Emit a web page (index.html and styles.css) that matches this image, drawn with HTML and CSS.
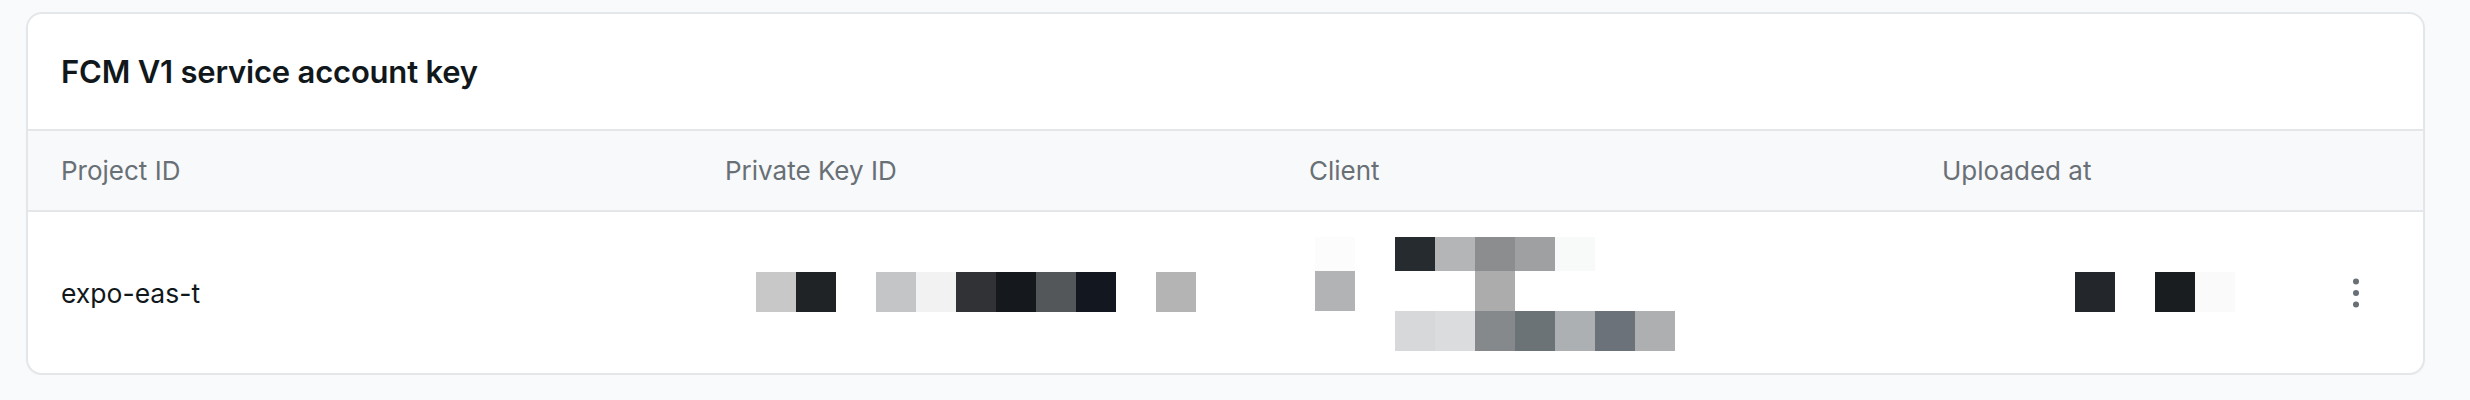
FILE: index.html
```html
<!DOCTYPE html>
<html lang="en">
<head>
<meta charset="utf-8">
<title>FCM V1 service account key</title>
<link rel="stylesheet" href="styles.css">
</head>
<body>
<div class="page">
  <section class="card">
    <header class="card-title">
      <h2>FCM V1 service account key</h2>
    </header>
    <div class="row head">
      <div class="cell">Project ID</div>
      <div class="cell">Private Key ID</div>
      <div class="cell">Client</div>
      <div class="cell">Uploaded at</div>
      <div class="cell"></div>
    </div>
    <div class="row body">
      <div class="cell">expo-eas-t</div>
      <div class="cell">
        <div class="blur key">
          <span class="px g204"></span><span class="px d1"></span><span class="px"></span><span class="px g196"></span><span class="px g242"></span><span class="px d2"></span><span class="px d3"></span><span class="px g85"></span><span class="px d4"></span><span class="px"></span><span class="px g180"></span>
        </div>
      </div>
      <div class="cell">
        <div class="blur client">
          <span class="px g252"></span><span class="px"></span><span class="px d5"></span><span class="px g181"></span><span class="px g140"></span><span class="px g160"></span><span class="px g248"></span><span class="px"></span><span class="px"></span>
          <span class="px g179"></span><span class="px"></span><span class="px"></span><span class="px"></span><span class="px g172"></span><span class="px"></span><span class="px"></span><span class="px"></span><span class="px"></span>
          <span class="px"></span><span class="px"></span><span class="px g216"></span><span class="px g219"></span><span class="px g135"></span><span class="px s115"></span><span class="px g176"></span><span class="px s112"></span><span class="px g174"></span>
        </div>
      </div>
      <div class="cell">
        <div class="blur date">
          <span class="px d6"></span><span class="px"></span><span class="px d7"></span><span class="px g250"></span>
        </div>
      </div>
      <div class="cell">
        <button class="kebab" aria-label="More options">
          <svg width="24" height="36" viewBox="0 0 24 36" aria-hidden="true">
            <circle cx="12" cy="6.5" r="3" fill="#687076"/>
            <circle cx="12" cy="18" r="3" fill="#687076"/>
            <circle cx="12" cy="29.5" r="3" fill="#687076"/>
          </svg>
        </button>
      </div>
    </div>
  </section>
</div>
</body>
</html>
```

FILE: styles.css
```css
* { box-sizing: border-box; }

html, body {
  margin: 0;
  padding: 0;
  background: #f9fafb;
  font-family: Inter, "Noto Sans", "Liberation Sans", sans-serif;
  color: #11181c;
}

.page {
  padding: 12px 45px 0 26px;
}

.card {
  background: #ffffff;
  border: 2px solid #e4e7ea;
  border-radius: 16px;
  overflow: hidden;
  box-shadow: 0 1px 2px rgba(0, 0, 0, 0.03);
}

.card-title {
  height: 117px;
  display: flex;
  align-items: center;
  padding-left: 33px;
  border-bottom: 2px solid #e4e7ea;
}

.card-title h2 {
  margin: 0;
  font-size: 31px;
  font-weight: 600;
  letter-spacing: -0.2px;
  color: #11181c;
}

.row {
  display: grid;
  grid-template-columns: 664px 584px 633px 1fr 24px;
  align-items: center;
  padding: 0 55px 0 33px;
}

.row.head {
  height: 81px;
  background: #f8f9fa;
  border-bottom: 2px solid #e4e7ea;
  color: #687076;
  font-size: 26px;
}

.row.body {
  height: 161px;
  font-size: 26.5px;
  color: #11181c;
}

.cell {
  white-space: nowrap;
}

.blur {
  display: grid;
  grid-auto-rows: 40px;
  width: max-content;
}

.blur.key {
  grid-template-columns: repeat(11, 40px);
  margin-left: 31px;
  margin-top: -1px;
}

.blur.client {
  grid-template-columns: repeat(9, 40px);
  grid-template-rows: 34px 40px 40px;
  margin-left: 6px;
  margin-top: 3px;
}

.blur.date {
  grid-template-columns: repeat(4, 40px);
  margin-left: 133px;
  margin-top: -1px;
}

.px { display: block; }

.g252 { background: #fcfcfc; }
.g250 { background: #fafafa; }
.g248 { background: #f8f9f9; }
.g242 { background: #f2f2f2; }
.g219 { background: #dbdcdd; }
.g216 { background: #d7d8d9; }
.g204 { background: #c8c8c8; }
.g196 { background: #c4c5c6; }
.g181 { background: #b4b5b6; }
.g180 { background: #b4b4b5; }
.g179 { background: #b2b3b4; }
.g176 { background: #adb0b2; }
.g174 { background: #adafb1; }
.g172 { background: #acacac; }
.g160 { background: #9fa0a1; }
.g140 { background: #8c8d8f; }
.g135 { background: #85898c; }
.s115 { background: #6c7376; }
.s112 { background: #6c727a; }
.g85 { background: #53575a; }
.d1 { background: #202326; }
.d2 { background: #313236; }
.d3 { background: #15191d; }
.d4 { background: #131820; }
.d5 { background: #262b2f; }
.d6 { background: #23262a; }
.d7 { background: #1a1d20; }

.kebab {
  display: flex;
  align-items: center;
  justify-content: center;
  width: 24px;
  height: 36px;
  padding: 0;
  border: 0;
  background: transparent;
  cursor: pointer;
}
```
